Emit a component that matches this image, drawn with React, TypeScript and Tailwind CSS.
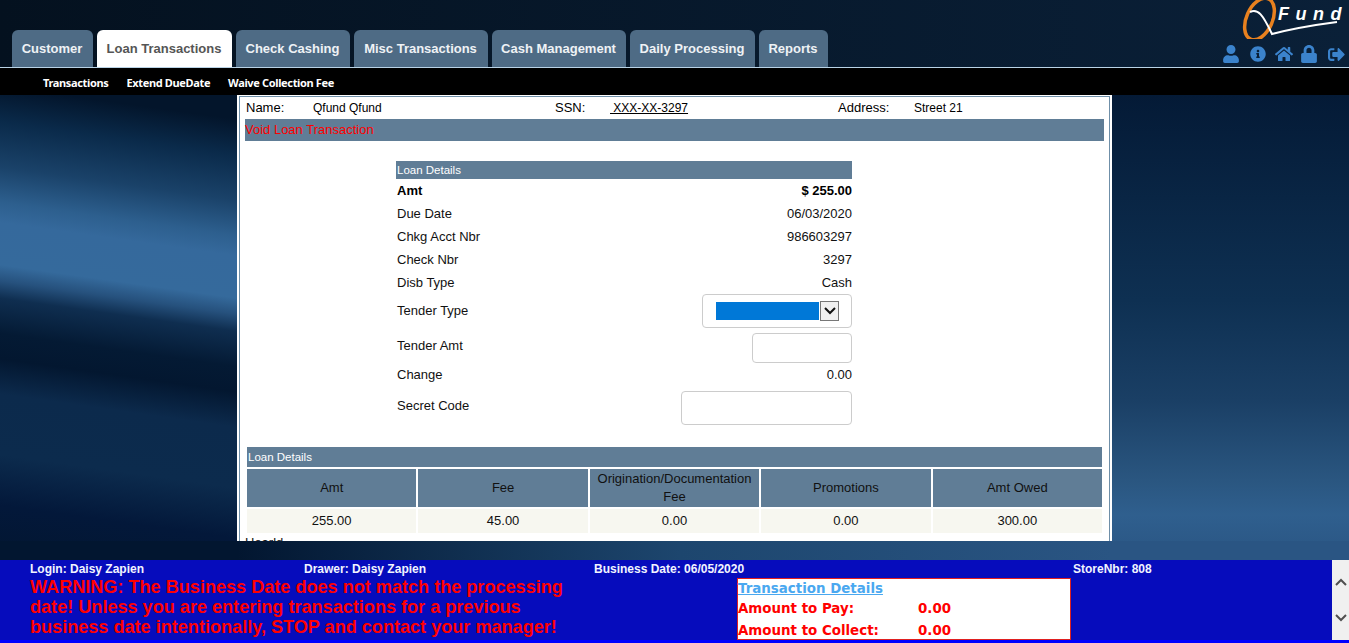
import React from 'react';
import { FaUser, FaInfoCircle, FaHome, FaLock, FaSignOutAlt } from 'react-icons/fa';

const tabs = [
  { label: 'Customer', width: 'w-[81px]' },
  { label: 'Loan Transactions', width: 'w-[135px]', active: true },
  { label: 'Check Cashing', width: 'w-[114px]' },
  { label: 'Misc Transactions', width: 'w-[134px]' },
  { label: 'Cash Management', width: 'w-[134px]' },
  { label: 'Daily Processing', width: 'w-[125px]' },
  { label: 'Reports', width: 'w-[69px]' },
];

const detailRows = [
  { label: 'Due Date', value: '06/03/2020' },
  { label: 'Chkg Acct Nbr', value: '986603297' },
  { label: 'Check Nbr', value: '3297' },
  { label: 'Disb Type', value: 'Cash' },
];

const columns = ['Amt', 'Fee', 'Origination/Documentation Fee', 'Promotions', 'Amt Owed'];
const amounts = ['255.00', '45.00', '0.00', '0.00', '300.00'];

const Logo = () => (
  <svg width="110" height="40" viewBox="0 0 110 40" className="block">
    <ellipse cx="20.5" cy="20" rx="13" ry="22" transform="rotate(24 20.5 20)" fill="none" stroke="#e8811f" strokeWidth="3.5" />
    <path d="M11 13 C 19 9, 24 16, 33 35 C 52 30, 75 26, 98 23" fill="none" stroke="#ffffff" strokeWidth="2" />
    <text x="39" y="21" fill="#ffffff" fontFamily="'Liberation Sans', sans-serif" fontSize="18" fontWeight="700" fontStyle="italic" letterSpacing="6.5">
      Fund
    </text>
  </svg>
);

const App: React.FC = () => {
  return (
    <div className="h-[643px] w-[1349px] overflow-hidden flex flex-col font-['Liberation_Sans',Arial,sans-serif]">
      {/* Header */}
      <header className="h-[68px] flex justify-between items-end border-b border-[#b9d3e6] shrink-0 bg-[linear-gradient(90deg,#04111f,#0a2038)]">
        <nav className="flex gap-[4px] pl-[12px]">
          {tabs.map(tab => (
            <div
              key={tab.label}
              className={`${tab.width} h-[37px] rounded-t-[6px] flex items-center justify-center pr-px text-[13px] font-bold ${tab.active ? 'bg-white text-[#555555]' : 'bg-[#4e6b85] text-[#eef2f5]'}`}
            >
              {tab.label}
            </div>
          ))}
        </nav>
        <div className="flex flex-col items-end">
          <Logo />
          <div className="flex items-center text-[#3b83cc] mt-[6px] mb-[4px] mr-[4px]">
            <FaUser className="text-[18px]" />
            <FaInfoCircle className="text-[16px] ml-[10px]" />
            <FaHome className="text-[18px] ml-[9px]" />
            <FaLock className="text-[18px] ml-[7px]" />
            <FaSignOutAlt className="text-[17px] ml-[10px]" />
          </div>
        </div>
      </header>

      {/* Sub navigation */}
      <div className="h-[27px] bg-black flex items-center gap-[18px] pl-[43px] pt-[3px] text-[11px] tracking-[-0.35px] font-bold text-white font-['Noto_Sans',sans-serif] shrink-0">
        <span>Transactions</span>
        <span>Extend DueDate</span>
        <span>Waive Collection Fee</span>
      </div>

      {/* Content */}
      <main className="flex-1 min-h-0 flex justify-center bg-no-repeat bg-[linear-gradient(90deg,#021630_237px,#1d466e_680px,#2a5583_1112px),linear-gradient(188deg,#03152b_85px,#0a2a4a_120px,#1a4269_165px,#2d5f8e_200px,#35699c_220px,#356a9c_262px,#26517d_278px,#0f2e50_295px,#041a34_330px,#031730_355px,#0c2a4c_390px,#0c2b4d_450px,#03183a_500px,#021630_560px),linear-gradient(180deg,#041a36_0px,#0e3052_205px,#1a3f65_305px,#2a5680_385px,#2f5f8e_420px,#2a5583_465px)] bg-[size:100%_19px,50%_100%,50%_100%] bg-[position:left_bottom,left_top,right_top]">
        <div className="w-[875px] h-[446px] overflow-hidden bg-white border-x-2 border-white shadow-[inset_1px_0_0_#6f8fa8,inset_-1px_0_0_#6f8fa8] border-t border-t-white">
          <div className="h-px bg-[#6f8fa8] mx-px" />
          <div className="h-[22px] flex items-center text-[12px] text-black">
            <span className="w-[62px] pl-[7px] text-[13px]">Name:</span>
            <span className="w-[254px] pl-[12px]">Qfund Qfund</span>
            <span className="w-[55px] text-[13px]">SSN:</span>
            <span className="w-[228px] underline whitespace-pre"> XXX-XX-3297</span>
            <span className="w-[76px] text-[13px]">Address:</span>
            <span>Street 21</span>
          </div>
          <div className="mx-[6px] h-[22px] bg-[#607d96] flex items-center text-[13px] text-[#ff0000]">Void Loan Transaction</div>

          <div className="ml-[157px] mt-[20px] w-[456px] text-[13px] leading-[16px] text-[#111111]">
            <div className="h-[18px] bg-[#607d96] flex items-center text-[11.5px] text-white pl-px">Loan Details</div>
            <div className="h-[23px] pl-px flex items-center justify-between font-bold text-black">
              <span>Amt</span>
              <span>$ 255.00</span>
            </div>
            {detailRows.map(row => (
              <div key={row.label} className="h-[23px] pl-px flex items-center justify-between">
                <span>{row.label}</span>
                <span>{row.value}</span>
              </div>
            ))}
            <div className="h-[34px] pl-px flex items-center justify-between">
              <span>Tender Type</span>
              <div className="w-[150px] h-[34px] border border-[#cccccc] rounded-[4px] flex items-center pl-[13px]">
                <div className="w-[103px] h-[18px] bg-[#0078d7]" />
                <div className="w-[19px] h-[20px] ml-px border border-[#777777] bg-[#f0f0f0] flex items-center justify-center">
                  <svg width="12" height="8" viewBox="0 0 12 8">
                    <path d="M1 1 L6 6 L11 1" fill="none" stroke="#111111" strokeWidth="2" />
                  </svg>
                </div>
              </div>
            </div>
            <div className="h-[30px] mt-[5px] pl-px flex justify-between">
              <span className="mt-[5px]">Tender Amt</span>
              <div className="w-[100px] h-[30px] border border-[#cccccc] rounded-[4px]" />
            </div>
            <div className="h-[22px] pl-px pt-[2px] flex items-center justify-between">
              <span>Change</span>
              <span>0.00</span>
            </div>
            <div className="h-[34px] mt-[6px] pl-px flex justify-between">
              <span className="mt-[7px]">Secret Code</span>
              <div className="w-[171px] h-[34px] border border-[#cccccc] rounded-[4px]" />
            </div>
          </div>

          <div className="mx-[8px] mt-[22px]">
            <div className="h-[20px] bg-[#607d96] flex items-center pt-[2px] text-[11.5px] text-white pl-px">Loan Details</div>
            <div className="grid grid-cols-5 gap-[2px] mt-[2px] text-[13px] leading-[18px] text-[#111111] text-center">
              {columns.map(col => (
                <div key={col} className="h-[38px] bg-[#607d96] flex items-center justify-center px-[6px]">{col}</div>
              ))}
              {amounts.map((amt, i) => (
                <div key={i} className="h-[24px] bg-[#f7f7f0] flex items-center justify-center">{amt}</div>
              ))}
            </div>
            <div className="mt-[2px] -ml-[2px] text-[13px] leading-[16px] text-[#111111]">Hearld</div>
          </div>
        </div>
      </main>

      {/* Footer */}
      <footer className="h-[83px] flex bg-[#0000ff] shrink-0">
        <div className="flex-1 h-[80px] bg-[#060cbc]">
          <div className="h-[18px] flex items-center pl-[30px] text-[12px] font-bold text-[#f2f4ff]">
            <span className="w-[274px]">Login: Daisy Zapien</span>
            <span className="w-[290px]">Drawer: Daisy Zapien</span>
            <span className="w-[479px]">Business Date: 06/05/2020</span>
            <span>StoreNbr: 808</span>
          </div>
          <div className="flex">
            <div className="w-[737px] pl-[30px] -mt-px text-[18.1px] leading-[20px] font-bold text-[#ff0000]">
              <div>WARNING: The Business Date does not match the processing</div>
              <div>date! Unless you are entering transactions for a previous</div>
              <div>business date intentionally, STOP and contact your manager!</div>
            </div>
            <div className="w-[334px] h-[62px] pt-px bg-white border border-[#e02020] font-['DejaVu_Sans',sans-serif] text-[13.4px] font-bold text-[#ff0000]">
              <div className="h-[19px] flex items-center text-[#4aa8f0] underline">Transaction Details</div>
              <div className="h-[21px] flex items-center">
                <span className="w-[180px]">Amount to Pay:</span>
                <span>0.00</span>
              </div>
              <div className="h-[19px] mt-[2px] flex items-center">
                <span className="w-[180px]">Amount to Collect:</span>
                <span>0.00</span>
              </div>
            </div>
          </div>
        </div>
        <div className="w-[17px] h-[80px] bg-[#f0f0f0] flex flex-col justify-between items-center pt-[18px] pb-[18px]">
          <svg width="12" height="8" viewBox="0 0 12 8">
            <path d="M1 7 L6 2 L11 7" fill="none" stroke="#505050" strokeWidth="2" />
          </svg>
          <svg width="12" height="8" viewBox="0 0 12 8">
            <path d="M1 1 L6 6 L11 1" fill="none" stroke="#505050" strokeWidth="2" />
          </svg>
        </div>
      </footer>
    </div>
  );
};

export default App;
